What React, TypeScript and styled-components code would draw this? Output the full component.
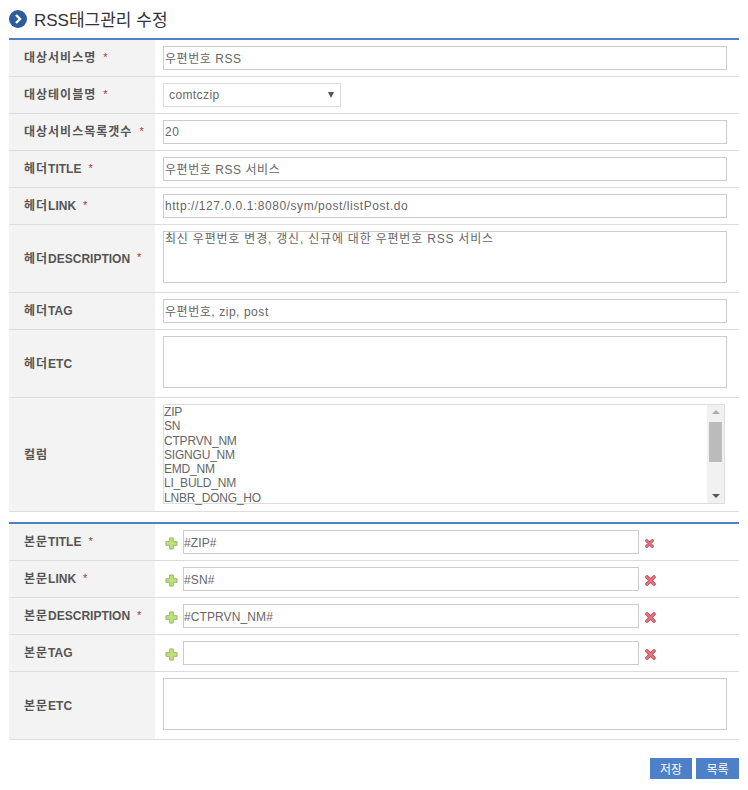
import styled, { createGlobalStyle } from 'styled-components';

const FONT = `"Liberation Sans", "Noto Sans CJK KR", sans-serif`;

const GlobalStyle = createGlobalStyle`
    html, body {
        margin: 0;
        padding: 0;
        background: #fff;
        font-family: ${FONT};
    }
`

const Page = styled.div`
    width: 748px;
    height: 790px;
    box-sizing: border-box;
    padding: 0 9px;
    overflow: hidden;
`

const TitleBar = styled.div`
    display: flex;
    align-items: center;
    gap: 7px;
    height: 38px;
`

const Title = styled.h2`
    margin: 0 0 2px;
    font-size: 17px;
    font-weight: 400;
    color: #333;
`

const Section = styled.div<{ $gap?: number }>`
    border-top: 2px solid #4f81c7;
    margin-top: ${p => p.$gap ?? 0}px;
`

const Row = styled.div<{ $bottom?: number }>`
    display: grid;
    grid-template-columns: 146px 1fr;
    border-bottom: 1px solid #ddd;

    & > div:last-child {
        padding-bottom: ${p => p.$bottom ?? 6}px;
    }
`

const Label = styled.div`
    display: flex;
    align-items: center;
    gap: 7px;
    background: #f3f3f3;
    padding: 0 0 3px 15px;
    font-size: 12px;
    font-weight: 700;
    color: #555;
`

const Hangul = styled.span`
    letter-spacing: 1px;
`

const Star = styled.span`
    color: #a33;
    font-size: 11px;
    font-weight: 400;
`

const Field = styled.div`
    display: flex;
    align-items: center;
    padding: 6px 12px 6px 8px;
`

const TextInput = styled.input<{ $hangul?: boolean; $tight?: boolean }>`
    flex: 1;
    min-width: 0;
    height: 24px;
    box-sizing: border-box;
    padding: ${p => (p.$tight ? '1px 0 0' : p.$hangul ? '0 1px 2px' : '0 1px')};
    border: 1px solid #ccc;
    font-family: ${FONT};
    font-size: 12px;
    letter-spacing: ${p => (p.$tight ? '0.1px' : '0.55px')};
    color: #666;
    outline: none;
`

const TextArea = styled.textarea`
    flex: 1;
    height: 52px;
    box-sizing: border-box;
    padding: 1px 1px 0;
    border: 1px solid #ccc;
    font-family: ${FONT};
    font-size: 12px;
    line-height: 13px;
    letter-spacing: 0.8px;
    color: #666;
    resize: none;
    outline: none;
`

const SelectBox = styled.div`
    display: flex;
    align-items: center;
    justify-content: space-between;
    width: 178px;
    height: 24px;
    box-sizing: border-box;
    padding: 0 6px 0 5px;
    border: 1px solid #ddd;
    font-size: 12px;
    letter-spacing: 0.4px;
    color: #666;
`

const SelectArrow = styled.span`
    width: 0;
    height: 0;
    border-left: 3px solid transparent;
    border-right: 3px solid transparent;
    border-top: 6px solid #555;
`

const ListBox = styled.div`
    flex: 1;
    display: flex;
    height: 100px;
    box-sizing: border-box;
    margin-right: 2px;
    border: 1px solid #ddd;
`

const ListItems = styled.div`
    flex: 1;
    font-size: 12px;
    line-height: 14.3px;
    letter-spacing: -0.2px;
    color: #666;
`

const ScrollTrack = styled.div`
    display: flex;
    flex-direction: column;
    align-items: center;
    justify-content: space-between;
    width: 17px;
    background: #f1f1f1;
    padding: 5px 0;
    box-sizing: border-box;
`

const ScrollThumb = styled.div`
    width: 13px;
    height: 40px;
    margin-top: 4px;
    margin-bottom: auto;
    background: #bbb;
`

const ScrollUp = styled.span`
    width: 0;
    height: 0;
    margin-bottom: 4px;
    border-left: 4px solid transparent;
    border-right: 4px solid transparent;
    border-bottom: 4px solid #aaa;
`

const ScrollDown = styled.span`
    width: 0;
    height: 0;
    border-left: 4px solid transparent;
    border-right: 4px solid transparent;
    border-top: 4px solid #555;
`

const RepeatField = styled(Field)`
    gap: 5px;
`

const AddIcon = styled.svg`
    flex-shrink: 0;
    margin: 2px 0 0 2px;
`

const RemoveSlot = styled.div`
    display: flex;
    justify-content: flex-start;
    width: 82px;
    margin: 2px 0 0 1px;
`

const Buttons = styled.div`
    display: flex;
    justify-content: flex-end;
    gap: 4px;
    margin-top: 18px;
`

const Button = styled.button<{ $width: number }>`
    width: ${p => p.$width}px;
    height: 21px;
    padding: 0;
    border: 0;
    background: #4d80c8;
    color: #fff;
    font-family: ${FONT};
    font-size: 12px;
`

function TitleIcon() {
    return (
        <svg width="18" height="18" viewBox="0 0 18 18">
            <circle cx="9" cy="9" r="9" fill="#2c5c9c" />
            <path d="M7 5l4 4-4 4" fill="none" stroke="#fff" strokeWidth="2.4" />
        </svg>
    )
}

function PlusIcon() {
    return (
        <AddIcon width="13" height="13" viewBox="0 0 14 14">
            <path
                d="M5 1h4v4h4v4H9v4H5V9H1V5h4z"
                fill="#bfe27a"
                stroke="#94b368"
                strokeWidth="1"
                strokeLinejoin="round"
            />
        </AddIcon>
    )
}

function RemoveIcon({ size = 11 }: { size?: number }) {
    return (
        <svg width={size} height={size} viewBox="0 0 11 11">
            <path d="M2 2l7 7M9 2l-7 7" stroke="#a8525c" strokeWidth="3.6" strokeLinecap="round" />
            <path d="M2 2l7 7M9 2l-7 7" stroke="#ee6f7c" strokeWidth="2.2" strokeLinecap="round" />
        </svg>
    )
}

const topFields = [
    { prefix: '헤더', label: 'TITLE', value: '우편번호 RSS 서비스', hangul: true },
    { prefix: '헤더', label: 'LINK', value: 'http://127.0.0.1:8080/sym/post/listPost.do', hangul: false },
]

const columns = ['ZIP', 'SN', 'CTPRVN_NM', 'SIGNGU_NM', 'EMD_NM', 'LI_BULD_NM', 'LNBR_DONG_HO']

const bodyFields = [
    { label: 'TITLE', value: '#ZIP#', size: 9 },
    { label: 'LINK', value: '#SN#', size: 11 },
    { label: 'DESCRIPTION', value: '#CTPRVN_NM#', size: 11 },
]

function App() {
    return (
        <Page>
            <GlobalStyle />
            <TitleBar>
                <TitleIcon />
                <Title>RSS태그관리 수정</Title>
            </TitleBar>

            <Section>
                <Row>
                    <Label><Hangul>대상서비스명</Hangul> <Star>*</Star></Label>
                    <Field><TextInput $hangul readOnly value="우편번호 RSS" /></Field>
                </Row>
                <Row>
                    <Label><Hangul>대상테이블명</Hangul> <Star>*</Star></Label>
                    <Field>
                        <SelectBox>comtczip<SelectArrow /></SelectBox>
                    </Field>
                </Row>
                <Row>
                    <Label><Hangul>대상서비스목록갯수</Hangul> <Star>*</Star></Label>
                    <Field><TextInput readOnly value="20" /></Field>
                </Row>
                {topFields.map(f => (
                    <Row key={f.label}>
                        <Label><span><Hangul>{f.prefix}</Hangul>{f.label}</span> <Star>*</Star></Label>
                        <Field><TextInput $hangul={f.hangul} readOnly value={f.value} /></Field>
                    </Row>
                ))}
                <Row $bottom={9}>
                    <Label><span><Hangul>헤더</Hangul>DESCRIPTION</span> <Star>*</Star></Label>
                    <Field>
                        <TextArea readOnly value="최신 우편번호 변경, 갱신, 신규에 대한 우편번호 RSS 서비스" />
                    </Field>
                </Row>
                <Row>
                    <Label><span><Hangul>헤더</Hangul>TAG</span></Label>
                    <Field><TextInput $hangul readOnly value="우편번호, zip, post" /></Field>
                </Row>
                <Row $bottom={9}>
                    <Label><span><Hangul>헤더</Hangul>ETC</span></Label>
                    <Field><TextArea readOnly value="" /></Field>
                </Row>
                <Row $bottom={7}>
                    <Label><Hangul>컬럼</Hangul></Label>
                    <Field>
                        <ListBox>
                            <ListItems>
                                {columns.map(c => <div key={c}>{c}</div>)}
                            </ListItems>
                            <ScrollTrack>
                                <ScrollUp />
                                <ScrollThumb />
                                <ScrollDown />
                            </ScrollTrack>
                        </ListBox>
                    </Field>
                </Row>
            </Section>

            <Section $gap={10}>
                {bodyFields.map(f => (
                    <Row key={f.label}>
                        <Label><span><Hangul>본문</Hangul>{f.label}</span> <Star>*</Star></Label>
                        <RepeatField>
                            <PlusIcon />
                            <TextInput $tight readOnly value={f.value} />
                            <RemoveSlot><RemoveIcon size={f.size} /></RemoveSlot>
                        </RepeatField>
                    </Row>
                ))}
                <Row>
                    <Label><span><Hangul>본문</Hangul>TAG</span></Label>
                    <RepeatField>
                        <PlusIcon />
                        <TextInput $tight readOnly value="" />
                        <RemoveSlot><RemoveIcon /></RemoveSlot>
                    </RepeatField>
                </Row>
                <Row $bottom={9}>
                    <Label><span><Hangul>본문</Hangul>ETC</span></Label>
                    <Field><TextArea readOnly value="" /></Field>
                </Row>
            </Section>

            <Buttons>
                <Button $width={42}>저장</Button>
                <Button $width={43}>목록</Button>
            </Buttons>
        </Page>
    );
}

export default App;
